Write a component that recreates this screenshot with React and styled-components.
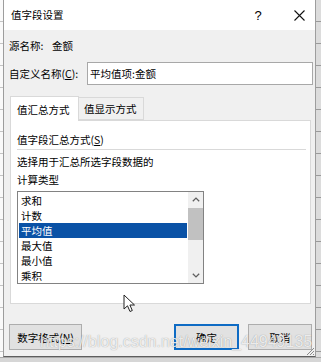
import styled, { createGlobalStyle } from 'styled-components'

const Global = createGlobalStyle`
  html, body { margin: 0; padding: 0; }
  body {
    width: 321px;
    height: 362px;
    overflow: hidden;
    background: #a9a9a9;
    font-family: "Noto Sans CJK SC", "Microsoft YaHei", sans-serif;
    font-size: 10.5px;
    color: #000;
  }
`

const Screen = styled.div`
  position: relative;
  display: flex;
  align-items: flex-start;
  width: 321px;
  height: 362px;
  overflow: hidden;
  background: linear-gradient(#a9a9a9 0 358px, #d6d6d6 358px);
`

const SheetEdge = styled.div`
  width: 3px;
  height: 357px;
  background: repeating-linear-gradient(#fafafa 0 21px, #c4c4c4 21px 22px);
`

const RightEdge = styled.div`
  width: 5px;
  height: 357px;
  background: repeating-linear-gradient(#dcdcdc 0 21px, #9a9a9a 21px 22px);
`

const Dialog = styled.div`
  position: relative;
  width: 313px;
  height: 357px;
  box-sizing: border-box;
  display: flex;
  flex-direction: column;
  background: #f0f0f0;
  border-left: 1px solid #9d9d9d;
  border-right: 1px solid #9d9d9d;
  border-bottom: 1px solid #5e5e5e;
`

const TitleBar = styled.div`
  height: 30px;
  flex-shrink: 0;
  display: flex;
  align-items: center;
  background: #fff;
  padding-left: 7px;
  padding-right: 1px;
  gap: 11px;
`

const Title = styled.div`
  flex: 1;
  font-size: 10.5px;
  padding-bottom: 1px;
`

const TitleButton = styled.div`
  width: 30px;
  height: 30px;
  display: flex;
  align-items: center;
  justify-content: center;
  font-family: "Liberation Sans", Arial, sans-serif;
  font-size: 13px;
`

const Body = styled.div`
  flex: 1;
  display: flex;
  flex-direction: column;
  padding: 0 2px 6px 5px;
`

const SourceRow = styled.div`
  margin-top: 8px;
  display: flex;
  line-height: 15px;
`

const FieldLabel = styled.span`
  width: ${p => p.$width}px;
  flex-shrink: 0;
`

const CustomRow = styled.div`
  margin-top: 9px;
  display: flex;
  align-items: center;
`

const NameInput = styled.div`
  width: 226px;
  height: 23px;
  box-sizing: border-box;
  margin-left: auto;
  border: 1px solid #a8a8a8;
  background: #fff;
  padding-left: 2px;
  display: flex;
  align-items: center;
`

const Tabs = styled.div`
  position: relative;
  z-index: 1;
  margin-top: 11px;
  margin-left: 1px;
  margin-bottom: -1px;
  display: flex;
  align-items: flex-end;
`

const Tab = styled.div`
  box-sizing: border-box;
  width: ${p => (p.$active ? 69 : 65)}px;
  height: ${p => (p.$active ? 25 : 23)}px;
  padding-left: ${p => (p.$active ? 6 : 5)}px;
  margin-bottom: ${p => (p.$active ? 0 : 1)}px;
  display: flex;
  align-items: center;
  background: ${p => (p.$active ? '#fff' : '#f0f0f0')};
  border: 1px solid #d9d9d9;
  border-bottom: ${p => (p.$active ? 'none' : '1px solid #d9d9d9')};
  border-left: ${p => (p.$active ? '1px solid #d9d9d9' : 'none')};
`

const Panel = styled.div`
  height: 184px;
  box-sizing: border-box;
  margin: 0 2px 0 1px;
  background: #fff;
  border: 1px solid #d9d9d9;
  padding: 11px 4px 0 6px;
  display: flex;
  flex-direction: column;
`

const Heading = styled.div`
  line-height: 15px;
`

const Separator = styled.div`
  height: 1px;
  margin-top: 2px;
  background: #d9d9d9;
`

const Description = styled.div`
  margin-top: 3px;
  line-height: 18px;
`

const ListBox = styled.div`
  margin-top: 2px;
  width: 187px;
  height: 93px;
  box-sizing: border-box;
  border: 1px solid #828282;
  display: flex;
`

const Items = styled.div`
  flex: 1;
  padding: 1px 1px 0;
  overflow: hidden;
`

const Item = styled.div`
  height: 15px;
  line-height: 15px;
  padding-left: 2px;
  background: ${p => (p.$selected ? '#0a52a6' : 'transparent')};
  color: ${p => (p.$selected ? '#fff' : '#000')};
`

const ScrollBar = styled.div`
  width: 15px;
  background: #f0f0f0;
  display: flex;
  flex-direction: column;
`

const ScrollArrow = styled.div`
  height: 15px;
  display: flex;
  align-items: center;
  justify-content: center;
`

const Thumb = styled.div`
  height: 32px;
  margin: 1px 0 0 0;
  background: #c1c1c1;
`

const Footer = styled.div`
  margin-top: 20px;
  display: flex;
  align-items: center;
`

const Button = styled.div`
  width: ${p => p.$width}px;
  height: 26px;
  box-sizing: border-box;
  margin-right: ${p => p.$gap || 0}px;
  display: flex;
  align-items: center;
  justify-content: center;
  background: #e1e1e1;
  border: ${p => (p.$default ? '2px solid #0e6bc4' : '1px solid #adadad')};
`

const Spacer = styled.div`
  flex: 1;
`

const Grip = styled.svg`
  position: absolute;
  right: 0;
  bottom: 0;
`

const Watermark = styled.div`
  position: absolute;
  left: 40px;
  top: 334px;
  font-family: "Liberation Sans", Arial, sans-serif;
  font-size: 16px;
  line-height: 16px;
  color: rgba(255, 255, 255, 0.82);
  text-shadow: 0 0 1px rgba(70, 70, 70, 0.55);
  white-space: nowrap;
  pointer-events: none;
`

const Cursor = styled.svg`
  position: absolute;
  left: 123px;
  top: 294px;
`

const Chevron = ({ up }) => (
  <svg width="8" height="5" viewBox="0 0 8 5">
    <path
      d={up ? 'M0.8 4.3 L4 1.1 L7.2 4.3' : 'M0.8 0.7 L4 3.9 L7.2 0.7'}
      fill="none"
      stroke="#606060"
      strokeWidth="1.3"
    />
  </svg>
)

const items = ['求和', '计数', '平均值', '最大值', '最小值', '乘积']

const App = () => {
  return (
    <>
      <Global />
      <Screen>
        <SheetEdge />
        <Dialog>
          <TitleBar>
            <Title>值字段设置</Title>
            <TitleButton>?</TitleButton>
            <TitleButton>
              <svg width="11" height="11" viewBox="0 0 11 11">
                <path d="M0.5 0.5 L10.5 10.5 M10.5 0.5 L0.5 10.5" stroke="#111" strokeWidth="1.1" />
              </svg>
            </TitleButton>
          </TitleBar>
          <Body>
            <SourceRow>
              <FieldLabel $width={43}>源名称:</FieldLabel>
              <span>金额</span>
            </SourceRow>
            <CustomRow>
              <span>自定义名称(<u>C</u>):</span>
              <NameInput>平均值项:金额</NameInput>
            </CustomRow>
            <Tabs>
              <Tab $active>值汇总方式</Tab>
              <Tab>值显示方式</Tab>
            </Tabs>
            <Panel>
              <Heading>值字段汇总方式(<u>S</u>)</Heading>
              <Separator />
              <Description>
                选择用于汇总所选字段数据的
                <br />
                计算类型
              </Description>
              <ListBox>
                <Items>
                  {items.map(label => (
                    <Item key={label} $selected={label === '平均值'}>
                      {label}
                    </Item>
                  ))}
                </Items>
                <ScrollBar>
                  <ScrollArrow>
                    <Chevron up />
                  </ScrollArrow>
                  <Thumb />
                  <Spacer />
                  <ScrollArrow>
                    <Chevron />
                  </ScrollArrow>
                </ScrollBar>
              </ListBox>
            </Panel>
            <Footer>
              <Button $width={73}>数字格式(<u>N</u>)</Button>
              <Spacer />
              <Button $width={65} $gap={9} $default>确定</Button>
              <Button $width={64} $gap={1}>取消</Button>
            </Footer>
          </Body>
          <Grip width="10" height="10" viewBox="0 0 10 10">
            <path d="M9 2 L2 9 M9 5 L5 9 M9 8 L8 9" stroke="#8a8a8a" strokeWidth="1" />
          </Grip>
        </Dialog>
        <RightEdge />
        <Cursor width="13" height="19" viewBox="0 0 13 19">
          <path
            d="M1 1 L1 15 L4.5 11.8 L7 17.5 L9.3 16.5 L6.9 11 L11.5 11 Z"
            fill="#fff"
            stroke="#222"
            strokeWidth="1"
            strokeLinejoin="round"
          />
        </Cursor>
        <Watermark>https://blog.csdn.net/weixin_44949135</Watermark>
      </Screen>
    </>
  )
}

export default App
